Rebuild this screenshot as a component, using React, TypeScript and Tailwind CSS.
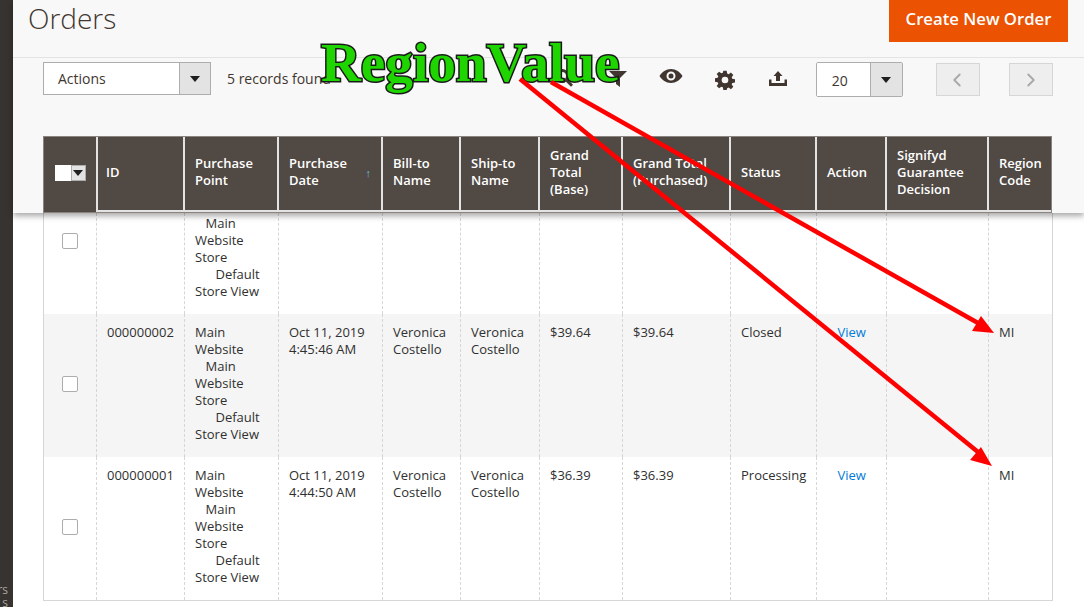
import { ChevronLeft, ChevronRight } from "lucide-react";

const columns = [
  { label: "ID", width: 87 },
  { label: "Purchase Point", width: 94 },
  { label: "Purchase Date", width: 104, sorted: true },
  { label: "Bill-to Name", width: 78 },
  { label: "Ship-to Name", width: 79 },
  { label: "Grand Total (Base)", width: 83 },
  { label: "Grand Total (Purchased)", width: 108 },
  { label: "Status", width: 86 },
  { label: "Action", width: 70 },
  { label: "Signifyd Guarantee Decision", width: 102 },
  { label: "Region Code", width: 64 },
];

const rows = [
  {
    id: "000000002",
    date: ["Oct 11, 2019", "4:45:46 AM"],
    base: "$39.64",
    purchased: "$39.64",
    status: "Closed",
    striped: true,
  },
  {
    id: "000000001",
    date: ["Oct 11, 2019", "4:44:50 AM"],
    base: "$36.39",
    purchased: "$36.39",
    status: "Processing",
    striped: false,
  },
];

const gridCols =
  "grid grid-cols-[52px_88px_94px_104px_78px_79px_83px_108px_86px_70px_102px_64px]";

function Caret() {
  return <span className="h-0 w-0 border-x-[5px] border-t-[6px] border-x-transparent border-t-[#1f1f1f]" />;
}

function Cell({ children }: { children?: React.ReactNode }) {
  return <div className="border-l border-dashed border-[#d6d6d6] px-[10px] pt-[10px]">{children}</div>;
}

function CheckCell({ offset }: { offset: string }) {
  return (
    <div className={`flex justify-center ${offset}`}>
      <span className="h-4 w-4 rounded-[2px] border border-[#adadad] bg-white" />
    </div>
  );
}

function StoreText() {
  return (
    <>
      <div className="pl-[10.5px]">Main</div>
      <div>Website Store</div>
      <div className="pl-[20.5px]">Default</div>
      <div>Store View</div>
    </>
  );
}

function Overlay() {
  return (
    <div className="absolute inset-0 z-20">
      <div className="absolute left-[321px] top-[28px] font-['Liberation_Serif',serif] text-[55.2px] leading-[70px] font-bold text-[#1ed500] [-webkit-text-stroke:3px_#1a1a1a] [paint-order:stroke_fill]">
        RegionValue
      </div>
      <svg className="pointer-events-none absolute left-0 top-0" width="1084" height="607">
        <line x1="551" y1="82" x2="978" y2="323" stroke="#ff0000" strokeWidth="4.5" />
        <polygon points="994,333 972,331 981,316" fill="#ff0000" />
        <line x1="520" y1="79" x2="978" y2="452" stroke="#ff0000" strokeWidth="4.5" />
        <polygon points="992,466 970,460 981,447" fill="#ff0000" />
      </svg>
    </div>
  );
}

export default function App() {
  return (
    <div className="relative flex h-[607px] w-[1084px] overflow-hidden bg-white font-['Open_Sans',sans-serif] text-[13px] leading-[17px] text-[#303030]">
      <aside className="relative w-[13px] shrink-0 overflow-hidden bg-[#373330]">
        <div className="absolute right-[5px] top-[583px] text-right text-[12px] leading-[13px] text-[#aaa6a0]">
          <div>rs</div>
          <div>s</div>
        </div>
      </aside>

      <main className="min-w-0 flex-1">
        <header className="relative z-10 h-[213px] bg-[#f8f8f8] shadow-[0_3px_6px_rgba(0,0,0,0.35)]">
          <div className="flex h-[58px] border-b border-[#e3e3e3] pl-[15px] pr-[16px]">
            <h1 className="text-[28px] leading-[36px] font-light text-[#41362f]">Orders</h1>
            <button className="ml-auto h-[42px] w-[179px] bg-[#eb5202] pb-[6px] text-[16.7px] font-semibold text-white">
              Create New Order
            </button>
          </div>

          <div className="flex items-start pl-[30px] pt-[4px] text-[#41362f]">
            <div className="flex h-[33px] w-[168px] border border-[#adadad]">
              <div className="flex-1 bg-white pl-[14px] text-[14px] leading-[31px]">Actions</div>
              <div className="flex w-[31px] items-center justify-center border-l border-[#adadad] bg-[#e3e3e3]">
                <Caret />
              </div>
            </div>
            <div className="ml-4 text-[14px] leading-[33px]">5 records found</div>

            <svg className="ml-[223px] mt-[6px]" width="20" height="20" viewBox="0 0 20 20" fill="#41362f">
              <path d="M8 1a7 7 0 1 0 4 12.700l5 5 2-2-5-5A7 7 0 0 0 8 1zm0 3a4 4 0 1 1 0 8 4 4 0 0 1 0-8z" />
            </svg>
            <svg className="ml-[34px] mt-[8px]" width="20" height="18" viewBox="0 0 20 18" fill="#41362f">
              <path d="M1 1h18l-7 7v9l-4-3V8z" />
            </svg>
            <svg className="ml-[31px] mt-[6px]" width="24" height="16" viewBox="0 0 24 16" fill="#41362f">
              <path
                fillRule="evenodd"
                d="M12 1c5 0 9 3 11.500 7-2.500 4-6.500 7-11.500 7S3 12 .5 8C3 4 7 1 12 1zm0 2.500a4.500 4.500 0 1 0 0 9 4.500 4.500 0 0 0 0-9zm0 2a2.500 2.500 0 1 1 0 5 2.500 2.500 0 0 1 0-5z"
              />
            </svg>
            <svg className="ml-[32px] mt-[8px]" width="20" height="20" viewBox="0 0 24 24" fill="#41362f">
              <path
                fillRule="evenodd"
                d="M10 1h4l.6 3.200 1.800.8L19.100 3l2.900 2.900-2 2.700.8 1.800L24 11v4l-3.200.6-.8 1.800 2 2.700-2.900 2.900-2.700-2-1.800.8L14 24h-4l-.6-3.200-1.800-.8-2.700 2L2 19.100l2-2.700-.8-1.800L0 14v-4l3.200-.6.8-1.800-2-2.700L4.900 2l2.700 2 1.800-.8zM12 8a4 4 0 1 0 0 8 4 4 0 0 0 0-8z"
              />
            </svg>
            <svg className="ml-[34px] mt-[9px]" width="18" height="15" viewBox="0 0 18 15" fill="#41362f">
              <path d="M9 0l4.500 5H11v5H7V5H4.500zM0 8.500h2.500V12h13V8.500H18V15H0z" />
            </svg>

            <div className="ml-[29px] flex h-[35px] w-[87px] rounded-[2px] border border-[#adadad]">
              <div className="w-[53px] bg-white pl-[15px] text-[14px] leading-[35px]">20</div>
              <div className="flex flex-1 items-center justify-center border-l border-[#adadad] bg-[#e3e3e3]">
                <Caret />
              </div>
            </div>
            <div className="ml-[33px] mt-[1px] flex h-[33px] w-[44px] items-center justify-center border border-[#d6d6d6] bg-[#eeeeee] pr-[2px] text-[#a8a8a8]">
              <ChevronLeft size={22} />
            </div>
            <div className="ml-[29px] mt-[1px] flex h-[33px] w-[44px] items-center justify-center border border-[#d6d6d6] bg-[#eeeeee] text-[#a8a8a8]">
              <ChevronRight size={22} />
            </div>
          </div>

          <div className="absolute left-[30px] top-[136px] flex h-[77px] w-[1009px] border border-[#8a837f] bg-[#514943] font-semibold text-white">
            <div className="flex w-[52px] shrink-0 items-center justify-center pb-[3px]">
              <span className="h-[16px] w-[16px] bg-white" />
              <span className="flex h-[16px] w-[15px] items-center justify-center border border-[#adadad] bg-[#e3e3e3]">
                <Caret />
              </span>
            </div>
            {columns.map((col) => (
              <div
                key={col.label}
                className="relative flex shrink-0 items-center border-b-2 border-l-2 border-[#e3e3e3] pb-[3px] pl-[10px] pr-2 [&:nth-child(2)]:pl-[8px]"
                style={{ width: col.width }}
              >
                {col.label}
                {col.sorted ? <span className="absolute right-[10px] text-[11px] text-[#6fb7e3]">↑</span> : null}
              </div>
            ))}
          </div>
        </header>

        <div className="ml-[30px] w-[1010px] border-x border-b border-[#d6d6d6]">
          <div className={`${gridCols} h-[101px]`}>
            <CheckCell offset="pt-[20px]" />
            <Cell />
            <div className="border-l border-dashed border-[#d6d6d6] pl-[10px] pr-[5px] pt-[2px]">
              <StoreText />
            </div>
            <Cell />
            <Cell />
            <Cell />
            <Cell />
            <Cell />
            <Cell />
            <Cell />
            <Cell />
            <Cell />
          </div>
          {rows.map((row) => (
            <div key={row.id} className={`${gridCols} h-[143px] ${row.striped ? "bg-[#f5f5f5]" : "bg-white"}`}>
              <CheckCell offset="pt-[62px]" />
              <Cell>{row.id}</Cell>
              <div className="border-l border-dashed border-[#d6d6d6] pl-[10px] pr-[5px] pt-[10px]">
                <div>Main Website</div>
                <StoreText />
              </div>
              <Cell>
                <div>{row.date[0]}</div>
                <div>{row.date[1]}</div>
              </Cell>
              <Cell>Veronica Costello</Cell>
              <Cell>Veronica Costello</Cell>
              <Cell>{row.base}</Cell>
              <Cell>{row.purchased}</Cell>
              <Cell>{row.status}</Cell>
              <Cell>
                <a className="pl-[10.5px] text-[#007bdb]">View</a>
              </Cell>
              <Cell />
              <Cell>MI</Cell>
            </div>
          ))}
        </div>
      </main>

      <Overlay />
    </div>
  );
}
